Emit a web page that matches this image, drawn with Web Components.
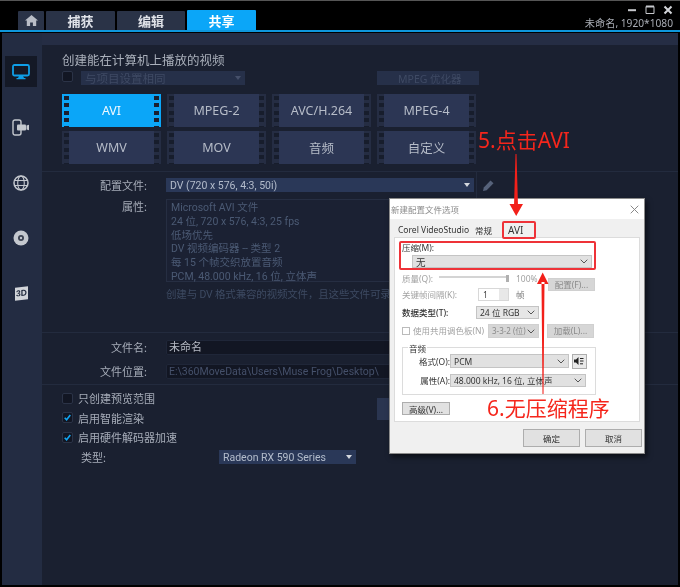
<!DOCTYPE html>
<html lang="zh"><head><meta charset="utf-8"><title>共享</title>
<style>
html,body{margin:0;padding:0;background:#000;width:680px;height:587px;overflow:hidden;font-family:"Noto Sans","Noto Sans CJK SC",sans-serif}
</style></head><body>
<app-window>
  <title-bar slot="top"></title-bar>
  <side-rail slot="rail"></side-rail>
  <share-panel slot="main"></share-panel>
  <config-dialog slot="over"></config-dialog>
  <note-layer slot="over"></note-layer>
</app-window>
<script>
const SANS='"Noto Sans","Noto Sans CJK SC",sans-serif';
const ROBO='Roboto,"Noto Sans CJK SC",sans-serif';
function def(name,html,init){
  customElements.define(name,class extends HTMLElement{
    constructor(){super();const s=this.attachShadow({mode:'open'});s.innerHTML=typeof html==='function'?html(this):html;}
    connectedCallback(){if(init)init(this,this.shadowRoot);}
  });
}
def('app-window',`<style>
:host{display:block;position:relative;width:680px;height:587px;background:#000;overflow:hidden;filter:blur(.5px);font-family:${SANS}}
.frame{display:flex;flex-direction:column;height:587px;box-sizing:border-box;border-top:1px solid #555}
.body{display:flex;height:552px;margin:1px 2px 0 2px;background:#1a2030}
</style><div class="frame"><slot name="top"></slot><div class="body"><slot name="rail"></slot><slot name="main"></slot></div></div><slot name="over"></slot>`);

def('top-tab',`<style>
:host{display:flex;align-items:center;justify-content:center;height:19px;background:#2a3347;color:#dfe2e8;font-size:13px;font-weight:700;border-radius:1px 1px 0 0;box-sizing:border-box}
:host([on]){background:#0ba6f8;color:#fff;height:20px}
</style><slot></slot>`);

def('title-bar',`<style>
:host{display:flex;height:29px;border-bottom:2px solid #0e97dc;align-items:flex-end;box-sizing:content-box;padding-left:18px;position:relative;gap:2px}
.right{margin-left:auto;margin-right:7px;align-self:stretch;display:flex;flex-direction:column;align-items:flex-end;color:#a9adb5;font-size:10.2px;line-height:14px}
.txt{margin-top:-1px;padding-top:1px}
.ctl{display:flex;gap:8px;height:18px;align-items:center;padding-top:3px;box-sizing:border-box}
svg{display:block}
</style>
<top-tab style="width:26px"><svg width="13" height="11" viewBox="0 0 13 11"><path d="M6.5 0 0 5.6h1.8V11h3.3V7.4h2.8V11h3.3V5.6H13z" fill="#b9bdc6"/></svg></top-tab>
<top-tab style="width:69px">捕获</top-tab>
<top-tab style="width:68px">编辑</top-tab>
<top-tab style="width:69px" on>共享</top-tab>
<div class="right"><div class="ctl">
<svg width="10" height="10" viewBox="0 0 10 10"><path d="M1 4.2h8v2H1z" fill="#c6c8cc"/></svg>
<svg width="10" height="10" viewBox="0 0 10 10"><path d="M1 1.5h8v7H1z" fill="none" stroke="#c6c8cc"/><path d="M1 1.5h8" stroke="#c6c8cc" stroke-width="2"/></svg>
<svg width="10" height="10" viewBox="0 0 10 10"><path d="M1.5 1.5l7 7M8.5 1.5l-7 7" stroke="#d2d4d8" stroke-width="2"/></svg>
</div><div class="txt">未命名, 1920*1080</div></div>`);

def('rail-item',`<style>
:host{display:flex;width:32px;height:31px;align-items:center;justify-content:center;margin-left:3px}
:host([on]){background:#141926}
</style><slot></slot>`);

def('side-rail',`<style>
:host{display:flex;flex-direction:column;gap:24.5px;width:40px;flex:none;background:#232c42;padding-top:23px;box-sizing:border-box}
svg{display:block}
</style>
<rail-item on><svg width="18" height="16" viewBox="0 0 18 16"><rect x="1" y="1" width="16" height="10.5" rx="1.5" fill="none" stroke="#0f9fe8" stroke-width="1.8"/><path d="M7 12h4l1 2H6zM4.5 14h9v1.2h-9z" fill="#0f9fe8"/></svg></rail-item>
<rail-item><svg width="18" height="17" viewBox="0 0 18 17"><rect x="1" y="1" width="8" height="15" rx="2" fill="none" stroke="#c4c8ce" stroke-width="1.4"/><rect x="5" y="5.5" width="9" height="6" rx="1" fill="#c4c8ce"/><path d="M14.5 6.5 17 5.8v5.4l-2.500-.7z" fill="#c4c8ce"/></svg></rail-item>
<rail-item><svg width="16" height="16" viewBox="0 0 16 16" fill="none" stroke="#c4c8ce" stroke-width="1.1"><circle cx="8" cy="8" r="7" stroke-width="1.5"/><ellipse cx="8" cy="8" rx="3.300" ry="7"/><path d="M1.300 5.500h13.400M1.300 10.500h13.400"/></svg></rail-item>
<rail-item><svg width="16" height="16" viewBox="0 0 16 16"><circle cx="8" cy="8" r="7.500" fill="#c4c8ce"/><circle cx="8" cy="8" r="3" fill="#3a4150"/><circle cx="8" cy="8" r="1.200" fill="#c4c8ce"/></svg></rail-item>
<rail-item><span style="display:block;width:13px;height:13px;background:#d2d5da;color:#222b3e;font:700 8.500px/13px 'Liberation Sans',sans-serif;text-align:center;transform:skewY(-6deg)">3D</span></rail-item>`);

def('film-btn',`<style>
:host{display:flex;width:99px;height:33px;color:#b6bcc8;font-size:12.500px;--s:#252d43;--h:#171d2c;--c:#2c3654}
:host([on]){--s:#0ba6f8;--c:#0ba6f8;--h:#1a2030;color:#eef8ff}
.p{width:7px;flex:none;background:var(--s)}
.l{background:repeating-linear-gradient(to bottom,var(--s) 0 2px,var(--h) 2px 6px,var(--s) 6px 7.500px) right/5px 100% no-repeat var(--s)}
.r{background:repeating-linear-gradient(to bottom,var(--s) 0 2px,var(--h) 2px 6px,var(--s) 6px 7.500px) left/5px 100% no-repeat var(--s)}
.m{flex:1;display:flex;align-items:center;justify-content:center;background:var(--c);margin:0 0}
</style><div class="p l"></div><div class="m"><slot></slot></div><div class="p r"></div>`);

def('dark-check',`<style>
:host{display:flex;align-items:center;gap:5px;height:12px;font-size:11px;color:#a6acb8;white-space:nowrap}
.b{width:11px;height:11px;box-sizing:border-box;background:#121623;border:1px solid #2b3347;border-radius:2px;display:block;flex:none}
svg{display:none;margin:1px}
:host([on]) svg{display:block}
</style><span class="b"><svg width="7" height="7" viewBox="0 0 7 7"><path d="M.7 3.700 2.600 5.800 6.300 1" fill="none" stroke="#12a5f0" stroke-width="1.600"/></svg></span><slot></slot>`);

def('dark-select',`<style>
:host{display:flex;align-items:center;height:14px;box-sizing:border-box;background:#2a3858;color:#b3bccb;font-size:10.500px;padding:0 4px;white-space:nowrap;overflow:hidden;font-family:${ROBO}}
:host([dim]){background:#263049;color:#3f4a64;font-family:${SANS}}
.c{margin-left:auto;width:0;height:0;border:3px solid transparent;border-top:4px solid #d4d8de;border-bottom:0;flex:none}
:host([dim]) .c{border-top-color:#46506a}
:host([nocaret]) .c{display:none}
</style><slot></slot><span class="c"></span>`);

def('form-row',`<style>
:host{display:flex;align-items:center;font-size:11px;color:#a6acb8}
.l{text-align:right;flex:none;white-space:nowrap;padding-right:19px;box-sizing:content-box;width:85px}
::slotted(*){flex:none}
</style><span class="l"><slot name="label"></slot></span><slot></slot>`);

def('share-panel',`<style>
:host{display:flex;flex-direction:column;flex:1;min-width:0;color:#a6acb8;font-size:11px}
.strip{height:12px;background:#252d44;flex:none}
section{padding-left:20px;box-sizing:border-box;border-bottom:1px solid #232b3e;flex:none}
.a{height:127px}
.h{font-size:12.500px;line-height:16px;color:#aab0bb;padding-top:8px;height:15px}
.opt{display:flex;align-items:center;height:14px;margin-top:3px}
.grid{display:grid;grid-template-columns:repeat(4,99px);gap:4px 6px;margin-top:9px}
.b{height:161px;padding-top:5px}
.props{width:450px;height:83px;box-sizing:border-box;border:1px solid #262e42;background:#1b2133;padding:1px 4px;font-family:${ROBO};font-size:10.500px;line-height:13.800px;color:#4b5a74;white-space:nowrap}
.desc{margin:6px 0 0 104px;color:#3d4a62;font-family:${ROBO};font-size:10.500px;line-height:14px;white-space:nowrap;letter-spacing:-.17px}
.c{height:52px;padding-top:6px}
.in{width:450px;height:15px;box-sizing:border-box;background:#121623;border:1px solid #1f2638;border-radius:2px;padding:0 2px;line-height:13px;font-family:${ROBO};font-size:10.500px;color:#b6bbc5}
.d{padding-top:7px;border:0}
.d dark-check{margin-top:7.500px}
.d dark-check:first-child{margin-top:0}
.ghost{position:absolute;left:377px;top:398px;width:30px;height:22px;background:#2a3550}
.pen{margin-left:2px;height:26px;margin-top:-6px;margin-bottom:-6px;border-left:1px solid #232b3e;padding-left:5px;display:flex;align-items:center}
</style>
<div class="strip"></div>
<section class="a">
  <div class="h">创建能在计算机上播放的视频</div>
  <div class="opt">
    <span style="width:11px;height:11px;background:#121623;border:1px solid #2b3347;box-sizing:border-box;border-radius:2px;margin-top:-4px"></span>
    <dark-select dim style="width:164px;margin-left:8px;font-size:11.500px;margin-right:132px">与项目设置相同</dark-select>
    <dark-select dim nocaret style="width:102px;padding-left:21px;font-size:10.500px">MPEG 优化器</dark-select>
  </div>
  <div class="grid">
    <film-btn on>AVI</film-btn><film-btn>MPEG-2</film-btn><film-btn>AVC/H.264</film-btn><film-btn>MPEG-4</film-btn>
    <film-btn>WMV</film-btn><film-btn>MOV</film-btn><film-btn>音频</film-btn><film-btn>自定义</film-btn>
  </div>
</section>
<section class="b">
  <form-row><span slot="label">配置文件:</span><dark-select style="width:308px">DV (720 x 576, 4:3, 50i)</dark-select>
    <span class="pen"><svg width="13" height="13" viewBox="0 0 13 13"><path d="M1 12l.8-3.500L8.500 1.500l3 2.800-6.800 7z" fill="#56627a"/></svg></span></form-row>
  <form-row style="align-items:flex-start;margin-top:6px"><span slot="label" style="line-height:14px">属性:</span><div class="props">Microsoft AVI 文件<br>24 位, 720 x 576, 4:3, 25 fps<br>低场优先<br>DV 视频编码器 -- 类型 2<br>每 15 个帧交织放置音频<br>PCM, 48.000 kHz, 16 位, 立体声</div></form-row>
  <div class="desc">创建与 DV 格式兼容的视频文件，且这些文件可录</div>
</section>
<section class="c">
  <form-row><span slot="label">文件名:</span><div class="in" style="font-size:11px">未命名</div></form-row>
  <form-row style="margin-top:8px"><span slot="label">文件位置:</span><div class="in" style="color:#45506a">E:\\360MoveData\\Users\\Muse Frog\\Desktop\\</div></form-row>
</section>
<section class="d">
  <dark-check>只创建预览范围</dark-check>
  <dark-check on>启用智能渲染</dark-check>
  <dark-check on>启用硬件解码器加速</dark-check>
  <div style="display:flex;align-items:center;margin:6px 0 0 19px"><span style="width:138px">类型:</span><dark-select style="width:137px;font-size:10.500px">Radeon RX 590 Series</dark-select></div>
</section>
<div class="ghost"></div>`);

def('win-select',`<style>
:host{display:flex;align-items:center;height:13px;box-sizing:border-box;background:#e1e1e1;border:1px solid #c4c4c4;color:#333;font-size:8.500px;padding:0 3px;white-space:nowrap;flex:none}
:host([off]){background:#d6d6d6;color:#8a8a8a;border-color:#d0d0d0}
svg{margin-left:auto;flex:none}
</style><slot></slot><svg width="8" height="5" viewBox="0 0 8 5"><path d="M.7.700 4 4 7.300.700" fill="none" stroke="#555" stroke-width="1"/></svg>`);

def('win-btn',`<style>
:host{display:flex;align-items:center;justify-content:center;height:13px;box-sizing:border-box;background:#e1e1e1;border:1px solid #adadad;color:#333;font-size:8.500px;white-space:nowrap;flex:none}
:host([off]){background:#d6d6d6;border-color:#d0d0d0;color:#8a8a8a}
</style><slot></slot>`);

def('config-dialog',`<style>
:host{position:absolute;left:389px;top:198px;width:256px;height:256px;box-sizing:border-box;background:#f0f0f0;border:1px solid #8b8b8b;box-shadow:2px 3px 5px rgba(0,0,0,.55);font-size:8.500px;color:#333;display:flex;flex-direction:column}
.t{height:20px;background:#fff;display:flex;align-items:center;padding:0 5px 0 1px;color:#8c8c8c;font-size:8.500px;flex:none}
.t svg{margin-left:auto}
.tabs{display:flex;height:18px;align-items:center;padding-left:8px;font-size:8.500px;color:#333;flex:none;background:#f0f0f0;padding-top:3px;box-sizing:border-box}
.tabs span:nth-child(2){margin-left:6px}
.tabs span:nth-child(3){margin-left:16px;font-size:10px}
.page{margin-left:4px;width:246px;height:185px;box-sizing:border-box;background:#fff;border:1px solid #dcdcdc;flex:none;padding-top:4px;overflow:visible}
.r{display:flex;align-items:flex-start;margin-left:7px;position:relative;flex:none;white-space:nowrap}
.dim{color:#a2a2a2}
.slider{width:70px;height:9px;margin:2px 0 0 0;position:relative;border-top:2px solid #d4d4d4;box-sizing:border-box;flex:none}
.slider:after{content:"";position:absolute;right:0;top:-3px;width:3px;height:7px;background:#b0b0b0}
.group{margin:9px 0 0 7px;width:194px;height:48px;box-sizing:border-box;border:1px solid #dcdcdc;padding-top:6px;position:relative}
.gl{position:absolute;left:5px;top:-4px;background:#fff;padding:0 1px;line-height:10px;font-size:8.500px}
.g{display:flex;align-items:center;height:14px}
.g .k{width:47px;text-align:right;flex:none;white-space:nowrap}
.foot{display:flex;justify-content:flex-end;gap:5px;padding:7px 2px 0 0}
.ico{width:15px;height:15px;background:#e9e9e9;border:1px solid #adadad;box-sizing:border-box;margin-left:3px;display:flex;align-items:center;justify-content:center;flex:none}
.spin{width:31px;height:13px;box-sizing:border-box;border:1px solid #d8d8d8;margin:-1px 0 0 0;display:flex;flex:none;align-items:center;padding-left:4px;color:#444}
.spin i{margin-left:auto;width:9px;height:11px;background:#e8e8e8;display:block}
</style>
<div class="t">新建配置文件选项<svg width="9" height="9" viewBox="0 0 9 9"><path d="M.7.700l7.600 7.600M8.300.700.7 8.300" stroke="#888" stroke-width="1"/></svg></div>
<div class="tabs"><span>Corel VideoStudio</span><span>常规</span><span>AVI</span></div>
<div class="page">
  <div class="r" style="height:12px;line-height:12px">压缩(M):</div>
  <div class="r" style="margin-left:17px;margin-top:1px"><win-select style="width:180px;font-size:9.500px">无</win-select></div>
  <div class="r dim" style="height:17px;margin-top:4px;padding-top:1px;box-sizing:border-box;line-height:12px;">
    <span style="width:37px;margin-top:0">质量(Q):</span><div class="slider" style="margin-top:3px"></div><span style="margin-left:7px">100%</span>
    <win-btn off style="width:47px;position:absolute;left:146px;top:6px">配置(F)...</win-btn></div>
  <div class="r dim" style="height:13px;line-height:12px"><span style="width:76px">关键帧间隔(K):</span><div class="spin">1<i></i></div><span style="margin-left:7px;color:#777">帧</span></div>
  <div class="r" style="height:13px;margin-top:4px;line-height:13px"><b style="width:74px;font-weight:500">数据类型(T):</b><win-select style="width:63px;font-size:8.500px;background:#e6e6e6">24 位 RGB</win-select></div>
  <div class="r dim" style="height:14px;margin-top:5px;line-height:14px"><span style="display:flex;align-items:center;width:86px"><span style="width:8px;height:8px;border:1px solid #bbb;margin-right:3px;flex:none;box-sizing:border-box"></span>使用共用调色板(N)</span><win-select off style="width:51px;height:14px;font-size:8px">3-3-2 (位)</win-select><win-btn off style="width:47px;height:14px;margin-left:8px">加载(L)...</win-btn></div>
  <div class="group"><span class="gl">音频</span>
    <div class="g"><span class="k">格式(O):</span><win-select style="width:119px;height:14px;margin-left:0">PCM</win-select><span class="ico"><svg width="11" height="10" viewBox="0 0 11 10"><path d="M0 3.500h2L4.500 1v8L2 6.500H0z" fill="#222"/><path d="M6 2.500h3.500M6 5h3.500M9 7.800H6" stroke="#222"/></svg></span></div>
    <div class="g" style="margin-top:5px"><span class="k">属性(A):</span><win-select style="width:136px;height:13px">48.000 kHz, 16 位, 立体声</win-select></div>
  </div>
  <div class="r" style="margin-top:7px"><win-btn style="width:48px;background:#e1e1e1">高级(V)...</win-btn></div>
</div>
<div class="foot"><win-btn style="width:57px;height:18px">确定</win-btn><win-btn style="width:57px;height:18px">取消</win-btn></div>`);

def('note-layer',`<style>
:host{position:absolute;left:0;top:0;width:680px;height:587px;display:block;pointer-events:none;font-family:${SANS}}
.n{position:absolute;color:#f5261c;white-space:nowrap;line-height:1}
.box{position:absolute;border:2px solid #ee3238;border-radius:2px;box-sizing:border-box}
svg{position:absolute;left:0;top:0}
</style>
<span class="n" style="left:478px;top:130px;font-size:21px">5.点击AVI</span>
<span class="n" style="left:487px;top:398px;font-size:21px">6.无压缩程序</span>
<div class="box" style="left:502px;top:221px;width:34px;height:18px"></div>
<div class="box" style="left:399px;top:241px;width:197px;height:29px"></div>
<svg width="680" height="587" viewBox="0 0 680 587">
<path d="M515.500 154h1l1.500 52h-4z M509.500 204h13.500L516.200 216z" fill="#f2201a"/>
<path d="M541.500 282h3l-1 112h-1z M537 284h11.500L542.700 272.500z" fill="#f2201a"/>
</svg>`);
</script>
</body></html>
